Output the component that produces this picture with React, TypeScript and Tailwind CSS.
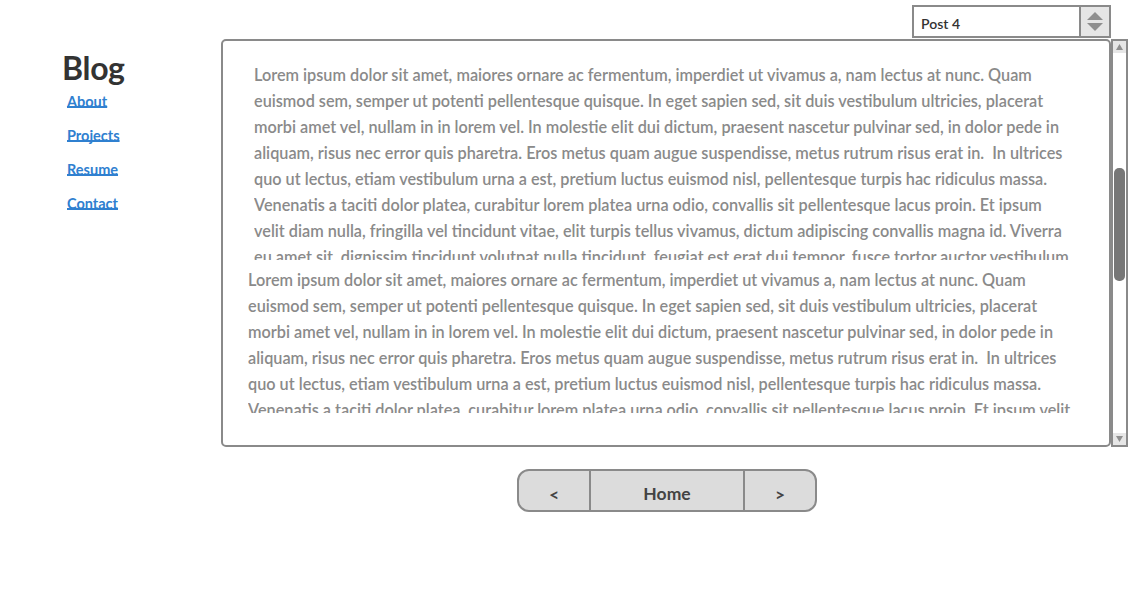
import React from "react";

const para = [
  "Lorem ipsum dolor sit amet, maiores ornare ac fermentum, imperdiet ut vivamus a, nam lectus at nunc. Quam",
  "euismod sem, semper ut potenti pellentesque quisque. In eget sapien sed, sit duis vestibulum ultricies, placerat",
  "morbi amet vel, nullam in in lorem vel. In molestie elit dui dictum, praesent nascetur pulvinar sed, in dolor pede in",
  "aliquam, risus nec error quis pharetra. Eros metus quam augue suspendisse, metus rutrum risus erat in.  In ultrices",
  "quo ut lectus, etiam vestibulum urna a est, pretium luctus euismod nisl, pellentesque turpis hac ridiculus massa.",
];

const firstTail = [
  "Venenatis a taciti dolor platea, curabitur lorem platea urna odio, convallis sit pellentesque lacus proin. Et ipsum",
  "velit diam nulla, fringilla vel tincidunt vitae, elit turpis tellus vivamus, dictum adipiscing convallis magna id. Viverra",
  "eu amet sit, dignissim tincidunt volutpat nulla tincidunt, feugiat est erat dui tempor, fusce tortor auctor vestibulum",
];

const secondTail = [
  "Venenatis a taciti dolor platea, curabitur lorem platea urna odio, convallis sit pellentesque lacus proin. Et ipsum velit",
];

const links = ["About", "Projects", "Resume", "Contact"];

const TextBlock = ({ lines, className }: { lines: string[]; className: string }) => (
  <div className={`overflow-hidden text-[16.25px] font-semibold leading-[26px] text-[#8a8a8a] ${className}`}>
    {lines.map((l, i) => (
      <div key={i} className="whitespace-pre">
        {l}
      </div>
    ))}
  </div>
);

export default function App() {
  return (
    <div className="flex w-[1148px] h-[600px] bg-white font-['Lato','Noto_Sans',sans-serif] text-[#333]">
      <aside className="w-[221px] shrink-0 pl-[62px] pt-[49px]">
        <h1 className="text-[32px] font-bold leading-[38px] text-[#333] tracking-[-0.3px]">Blog</h1>
        <nav className="flex flex-col items-start gap-[16px] pl-[5px] pt-[6px]">
          {links.map((l) => (
            <a
              key={l}
              href="#"
              className="text-[14.5px] font-bold leading-[18px] text-[#2f80d0] underline decoration-2 underline-offset-[-1px] [text-decoration-skip-ink:none]"
            >
              {l}
            </a>
          ))}
        </nav>
      </aside>

      <main className="flex flex-col pt-[5px]">
        <div className="flex w-[890px] justify-end">
          <div className="flex h-[33px] w-[199px] border-2 border-[#8a8a8a] bg-white">
            <div className="flex flex-1 items-center pl-[7px] pt-[3px] text-[14px] font-semibold text-[#333]">Post 4</div>
            <div className="flex w-[30px] flex-col items-center justify-center gap-[3px] border-l-2 border-[#8a8a8a] bg-[#e6e6e6]">
              <svg width="16" height="8" viewBox="0 0 16 8">
                <polygon points="8,0 16,8 0,8" fill="#8f8f8f" />
              </svg>
              <svg width="16" height="8" viewBox="0 0 16 8">
                <polygon points="0,0 16,0 8,8" fill="#8f8f8f" />
              </svg>
            </div>
          </div>
        </div>

        <div className="mt-[1px] flex">
          <div className="flex h-[408px] w-[890px] flex-col rounded-[5px] border-2 border-[#8a8a8a] bg-white">
            <TextBlock lines={[...para, ...firstTail]} className="ml-[31px] mt-[21px] h-[198px]" />
            <TextBlock lines={[...para, ...secondTail]} className="ml-[25px] mt-[7px] h-[146px]" />
          </div>
          <div className="flex h-[408px] w-[17px] flex-col border-2 border-[#8a8a8a] bg-white">
            <div className="flex h-[12px] items-center justify-center bg-[#e6e6e6]">
              <svg width="7" height="6" viewBox="0 0 7 6">
                <polygon points="3.5,0 7,6 0,6" fill="#8f8f8f" />
              </svg>
            </div>
            <div className="flex-1 px-[1px] pt-[115px]">
              <div className="h-[113px] rounded-[5px] bg-[#777]" />
            </div>
            <div className="flex h-[12px] items-center justify-center bg-[#e6e6e6]">
              <svg width="7" height="6" viewBox="0 0 7 6">
                <polygon points="0,0 7,0 3.5,6" fill="#8f8f8f" />
              </svg>
            </div>
          </div>
        </div>

        <div className="ml-[296px] mt-[22px] flex h-[43px] w-[300px] overflow-hidden rounded-[12px] border-2 border-[#8a8a8a] bg-[#dcdcdc] text-[17.5px] font-bold text-[#444]">
          <div className="flex w-[70px] items-end justify-center pb-[7px] leading-none">&lt;</div>
          <div className="flex flex-1 items-end justify-center border-x-2 border-[#8a8a8a] pb-[8px] leading-none">Home</div>
          <div className="flex w-[70px] items-end justify-center pb-[7px] leading-none">&gt;</div>
        </div>
      </main>
    </div>
  );
}
